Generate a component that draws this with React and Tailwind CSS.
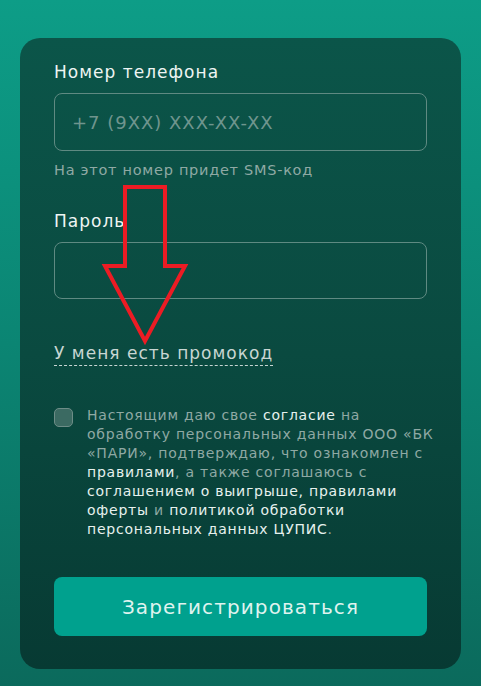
const Hl = ({ children }) => <span className="text-[#e6f1ee]">{children}</span>;

export default function App() {
  return (
    <div
      className="relative min-h-[686px] w-full bg-gradient-to-b from-[#0d9d87] via-[#0b8573] to-[#0b6a5c] px-[20px] pt-[38px] pb-[18px]"
      style={{ fontFamily: "'DejaVu Sans', 'Noto Sans', sans-serif" }}
    >
      <div className="rounded-[20px] bg-gradient-to-b from-[#0b5549] via-[#0a4a40] to-[#073a33] px-[34px] pt-[23px] pb-[33px]">
        <label className="block text-[17px] leading-[22px] tracking-[0.06em] text-[#eef5f3]">Номер телефона</label>
        <div className="mt-[10px] flex h-[58px] items-center rounded-[8px] border border-[#5f8a82] px-[17px]">
          <span className="text-[18px] tracking-[0.055em] text-[#6f958e]">+7 (9XX) XXX-XX-XX</span>
        </div>
        <p className="mt-[9px] text-[14.5px] leading-[20px] tracking-[0.05em] text-[#8fa9a4]">На этот номер придет SMS-код</p>

        <label className="mt-[30px] block text-[17px] leading-[22px] tracking-[0.06em] text-[#eef5f3]">Пароль</label>
        <div className="mt-[10px] h-[57px] rounded-[8px] border border-[#5f8a82]" />

        <div className="mt-[43px] leading-[22px]">
          <span className="border-b border-dashed border-[#c8d6d3] pb-[2px] text-[17px] tracking-[0.06em] text-[#c8d6d3]">
            У меня есть промокод
          </span>
        </div>

        <div className="mt-[41px] flex gap-[14px]">
          <div className="mt-[2px] h-[19px] w-[19px] shrink-0 rounded-[5px] border border-[#6d8d87] bg-[#3b6a62]" />
          <p className="whitespace-nowrap text-[14px] leading-[19px] tracking-[0.055em] text-[#8fa9a4]">
            Настоящим даю свое <Hl>согласие</Hl> на
            <br />
            обработку персональных данных ООО «БК
            <br />
            «ПАРИ», подтверждаю, что ознакомлен с
            <br />
            <Hl>правилами</Hl>, а также соглашаюсь с
            <br />
            <Hl>соглашением о выигрыше, правилами</Hl>
            <br />
            <Hl>оферты</Hl> и <Hl>политикой обработки</Hl>
            <br />
            <Hl>персональных данных ЦУПИС</Hl>.
          </p>
        </div>

        <button className="mt-[38px] flex h-[59px] w-full items-center justify-center rounded-[8px] bg-[#00a18e] text-[20px] tracking-[0.055em] text-[#dff3ef]">
          Зарегистрироваться
        </button>
      </div>

      <svg className="pointer-events-none absolute left-0 top-0" width="481" height="686">
        <polygon
          points="125,187 165,187 165,266 185,266 145,341 105,266 125,266"
          fill="none"
          stroke="#ec1c24"
          strokeWidth="4"
          strokeLinejoin="miter"
        />
      </svg>
    </div>
  );
}
